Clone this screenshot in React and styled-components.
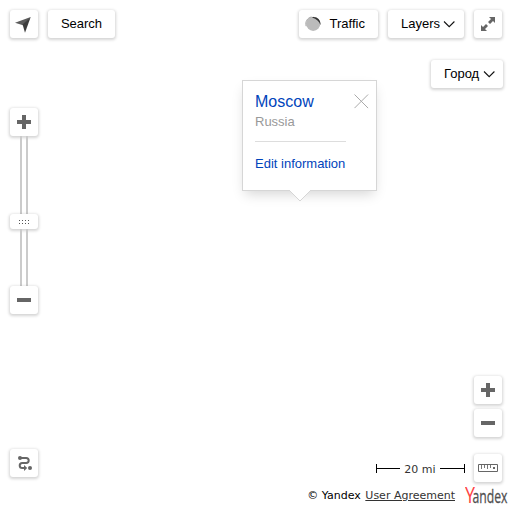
import React from 'react';
import styled, { createGlobalStyle } from 'styled-components';

const GlobalStyle = createGlobalStyle`
  *, *::before, *::after { box-sizing: border-box; }
  body { margin: 0; background: #fff; font-family: "Liberation Sans", Arial, sans-serif; }
  svg { display: block; flex: none; }
`;

const MapView = styled.main`
  position: relative;
  display: flex;
  flex-direction: column;
  width: 512px;
  height: 512px;
  padding: 10px 10px 0;
  overflow: hidden;
  background: #fff;
`;

const Toolbar = styled.header`
  display: flex;
  gap: 10px;
`;

const Spacer = styled.div`
  flex: 1;
`;

const Button = styled.button`
  display: flex;
  flex: none;
  align-items: center;
  justify-content: ${(p) => (p.$padding ? 'flex-start' : 'center')};
  width: ${(p) => p.$width || 28}px;
  height: ${(p) => p.$height || 28}px;
  margin: 0 ${(p) => p.$outset ? -p.$outset : 0}px 0 0;
  padding: 0 0 0 ${(p) => p.$padding || 0}px;
  gap: ${(p) => p.$gap || 0}px;
  border: 0;
  border-radius: 3px;
  background: #fff;
  box-shadow: 0 1px 3px 1px rgba(0, 0, 0, 0.17);
  color: #000;
  font: 13px/28px "Liberation Sans", Arial, sans-serif;
  white-space: nowrap;
`;

const Body = styled.div`
  display: flex;
  justify-content: space-between;
  height: 444px;
`;

const LeftColumn = styled.div`
  display: flex;
  flex-direction: column;
  justify-content: space-between;
  width: 28px;
  padding: 70px 0 5px;
`;

const ZoomSlider = styled.div`
  display: flex;
  flex-direction: column;
  align-items: center;
`;

const Rail = styled.div`
  width: 8px;
  height: ${(p) => p.$length}px;
  border: solid #cbcbcb;
  border-width: 0 2px;
`;

const RightColumn = styled.div`
  display: flex;
  flex-direction: column;
  justify-content: space-between;
  align-items: flex-end;
  padding-top: 22px;
`;

const Controls = styled.div`
  display: flex;
  flex-direction: column;
  align-items: flex-end;
`;

const ZoomButtons = styled.div`
  display: flex;
  flex-direction: column;
  gap: 5px;
  margin-bottom: 17px;
`;

const ScaleRow = styled.div`
  display: flex;
  align-items: center;
  gap: 9px;
`;

const Scale = styled.div`
  display: flex;
  align-items: center;
  justify-content: space-between;
  width: 89px;
  height: 28px;
  color: #333;
  font: 11px/20px "DejaVu Sans", Verdana, sans-serif;
`;

const ScaleLabel = styled.span`
  padding-top: 3px;
`;

const ScaleArm = styled.span`
  display: flex;
  align-items: center;
  width: ${(p) => (p.$end ? 25 : 24)}px;
  height: 9px;
  border: solid #000;
  border-width: ${(p) => (p.$end ? '0 1px 0 0' : '0 0 0 1px')};

  &::after {
    content: '';
    flex: 1;
    height: 1px;
    background: #000;
  }
`;

const Footer = styled.footer`
  display: flex;
  justify-content: flex-end;
  gap: 10px;
  height: 30px;
  margin-right: -7px;
  color: #000;
  font: 11px/14px "DejaVu Sans", Verdana, sans-serif;
`;

const Copyright = styled.p`
  margin: 7px 0 0;
  white-space: pre;
`;

const Agreement = styled.a`
  margin-left: 1px;
  color: #333;
  text-decoration: underline;
`;

const Balloon = styled.section`
  position: absolute;
  left: 242px;
  top: 80px;
  display: flex;
  justify-content: space-between;
  width: 135px;
  height: 111px;
  padding: 11px 7px 0 12px;
  border: 1px solid #d6d6d6;
  background: #fff;
  box-shadow: 0 6px 12px -3px rgba(0, 0, 0, 0.17);
`;

const BalloonContent = styled.div`
  width: 91px;
`;

const Title = styled.h1`
  margin: 0;
  color: #0044bb;
  font-size: 16px;
  font-weight: 400;
  line-height: 20px;
`;

const Subtitle = styled.p`
  margin: 0;
  padding: 1px 0 10px;
  border-bottom: 1px solid #ddd;
  color: #999;
  font-size: 13px;
  line-height: 18px;
`;

const EditLink = styled.a`
  display: block;
  margin-top: 13px;
  color: #0044bb;
  font-size: 13px;
  line-height: 18px;
  white-space: nowrap;
`;

const CloseIcon = styled.svg`
  margin-top: 2px;
`;

const Tail = styled.svg`
  position: absolute;
  left: 45px;
  top: 108px;
`;

const Chevron = () => (
  <svg width="12" height="8" viewBox="0 0 12 8" fill="none" stroke="#111" strokeWidth="1.1">
    <path d="M1 1.5 6.2 6.7 11.4 1.5" />
  </svg>
);

const Plus = () => (
  <svg width="14" height="14" viewBox="0 0 14 14" fill="#666">
    <path d="M5 0h4v5h5v4H9v5H5V9H0V5h5z" />
  </svg>
);

const Minus = () => (
  <svg width="14" height="4" viewBox="0 0 14 4" fill="#666">
    <path d="M0 0h14v4H0z" />
  </svg>
);

const Locate = () => (
  <svg width="28" height="28" viewBox="0 0 28 28">
    <path d="M20.7 7 5 12.7 13 15.2z" fill="#5c5c5c" />
    <path d="M20.7 7 15 22.7 12.6 14.6z" fill="#3c3c3c" />
  </svg>
);

const TrafficLight = () => (
  <svg width="16" height="16" viewBox="0 0 16 16">
    <circle cx="8.2" cy="7.8" r="7.1" fill="#bbb" />
    <path d="M8 .9c4.6-.3 8.2 3.4 7.4 8.2-1-3.8-3.8-5.9-8.4-7.5z" fill="#333" />
    <path d="M1.1 10.2C-.2 5.8 2.3 1.8 6.6.9" fill="none" stroke="#999" strokeWidth=".8" />
  </svg>
);

const Expand = () => (
  <svg width="28" height="28" viewBox="0 0 28 28" fill="#666">
    <path d="M15 7h6v6l-2-2-3 3-2-2 3-3zM13 21H7v-6l2 2 3-3 2 2-3 3z" />
  </svg>
);

const Grip = () => (
  <svg width="12" height="5" viewBox="0 0 12 5" fill="#555" shapeRendering="crispEdges">
    {[1, 4, 7, 10].map((x) => (
      <path key={x} d={`M${x} 1h1v1h-1zM${x} 4h1v1h-1z`} />
    ))}
  </svg>
);

const Route = () => (
  <svg width="28" height="28" viewBox="0 0 28 28">
    <path d="M10 9h6.2a2.4 2.4 0 0 1 0 5h-4a2.5 2.5 0 0 0 0 5H15" fill="none" stroke="#666" strokeWidth="2" />
    <circle cx="10" cy="9" r="2" fill="#666" />
    <circle cx="20" cy="19" r="2" fill="#666" />
    <path d="m14 16 3.2 3-3.2 3z" fill="#666" />
  </svg>
);

const Ruler = () => (
  <svg width="20" height="8" viewBox="0 0 20 8">
    <path d="M.5.5h19v7H.5z" fill="none" stroke="#666" />
    <path d="M3.5 1v4M6.5 1v3M9.5 1v4M12.5 1v3" stroke="#777" />
    <path d="M15 3h2v2h-2z" fill="#666" />
  </svg>
);

const Logo = () => (
  <svg width="44" height="30" viewBox="0 0 44 30" fontFamily='"Open Sans", sans-serif'>
    <text x="0" y="21" fontSize="22" fontWeight="400" fill="#f44" textLength="10" lengthAdjust="spacingAndGlyphs">Y</text>
    <text x="7.5" y="21" fontSize="19" fill="#505050" stroke="#505050" strokeWidth=".3" textLength="35" lengthAdjust="spacingAndGlyphs">andex</text>
  </svg>
);

export default function App() {
  return (
    <>
      <GlobalStyle />
      <MapView>
        <Toolbar>
          <Button aria-label="Locate"><Locate /></Button>
          <Button $width={67}>Search</Button>
          <Spacer />
          <Button $width={79} $padding={6} $gap={8.5}><TrafficLight />Traffic</Button>
          <Button $width={76} $padding={13} $gap={3}>Layers<Chevron /></Button>
          <Button aria-label="Fullscreen"><Expand /></Button>
        </Toolbar>
        <Body>
          <LeftColumn>
            <ZoomSlider>
              <Button aria-label="Zoom in"><Plus /></Button>
              <Rail $length={78} />
              <Button $height={15} aria-label="Zoom level"><Grip /></Button>
              <Rail $length={57} />
              <Button aria-label="Zoom out"><Minus /></Button>
            </ZoomSlider>
            <Button aria-label="Route"><Route /></Button>
          </LeftColumn>
          <RightColumn>
            <Button $width={72} $padding={13} $gap={4} $outset={1}>Город<Chevron /></Button>
            <Controls>
              <ZoomButtons>
                <Button aria-label="Zoom in"><Plus /></Button>
                <Button aria-label="Zoom out"><Minus /></Button>
              </ZoomButtons>
              <ScaleRow>
                <Scale><ScaleArm /><ScaleLabel>20 mi</ScaleLabel><ScaleArm $end /></Scale>
                <Button aria-label="Ruler"><Ruler /></Button>
              </ScaleRow>
            </Controls>
          </RightColumn>
        </Body>
        <Footer>
          <Copyright>© Yandex <Agreement>User Agreement</Agreement></Copyright>
          <Logo />
        </Footer>
        <Balloon>
          <BalloonContent>
            <Title>Moscow</Title>
            <Subtitle>Russia</Subtitle>
            <EditLink>Edit information</EditLink>
          </BalloonContent>
          <CloseIcon width="15" height="15" viewBox="0 0 15 15" stroke="#aaa" fill="none">
            <path d="m.5.5 13.6 13.6M14.1.5.5 14.1" />
          </CloseIcon>
          <Tail width="24" height="13" viewBox="0 0 24 13">
            <path d="M0 0h24L12 12z" fill="#fff" />
            <path d="m1 1 11 11L23 1" fill="none" stroke="#d6d6d6" />
            <path d="M0 0h24v1H0z" fill="#fff" />
          </Tail>
        </Balloon>
      </MapView>
    </>
  );
}
